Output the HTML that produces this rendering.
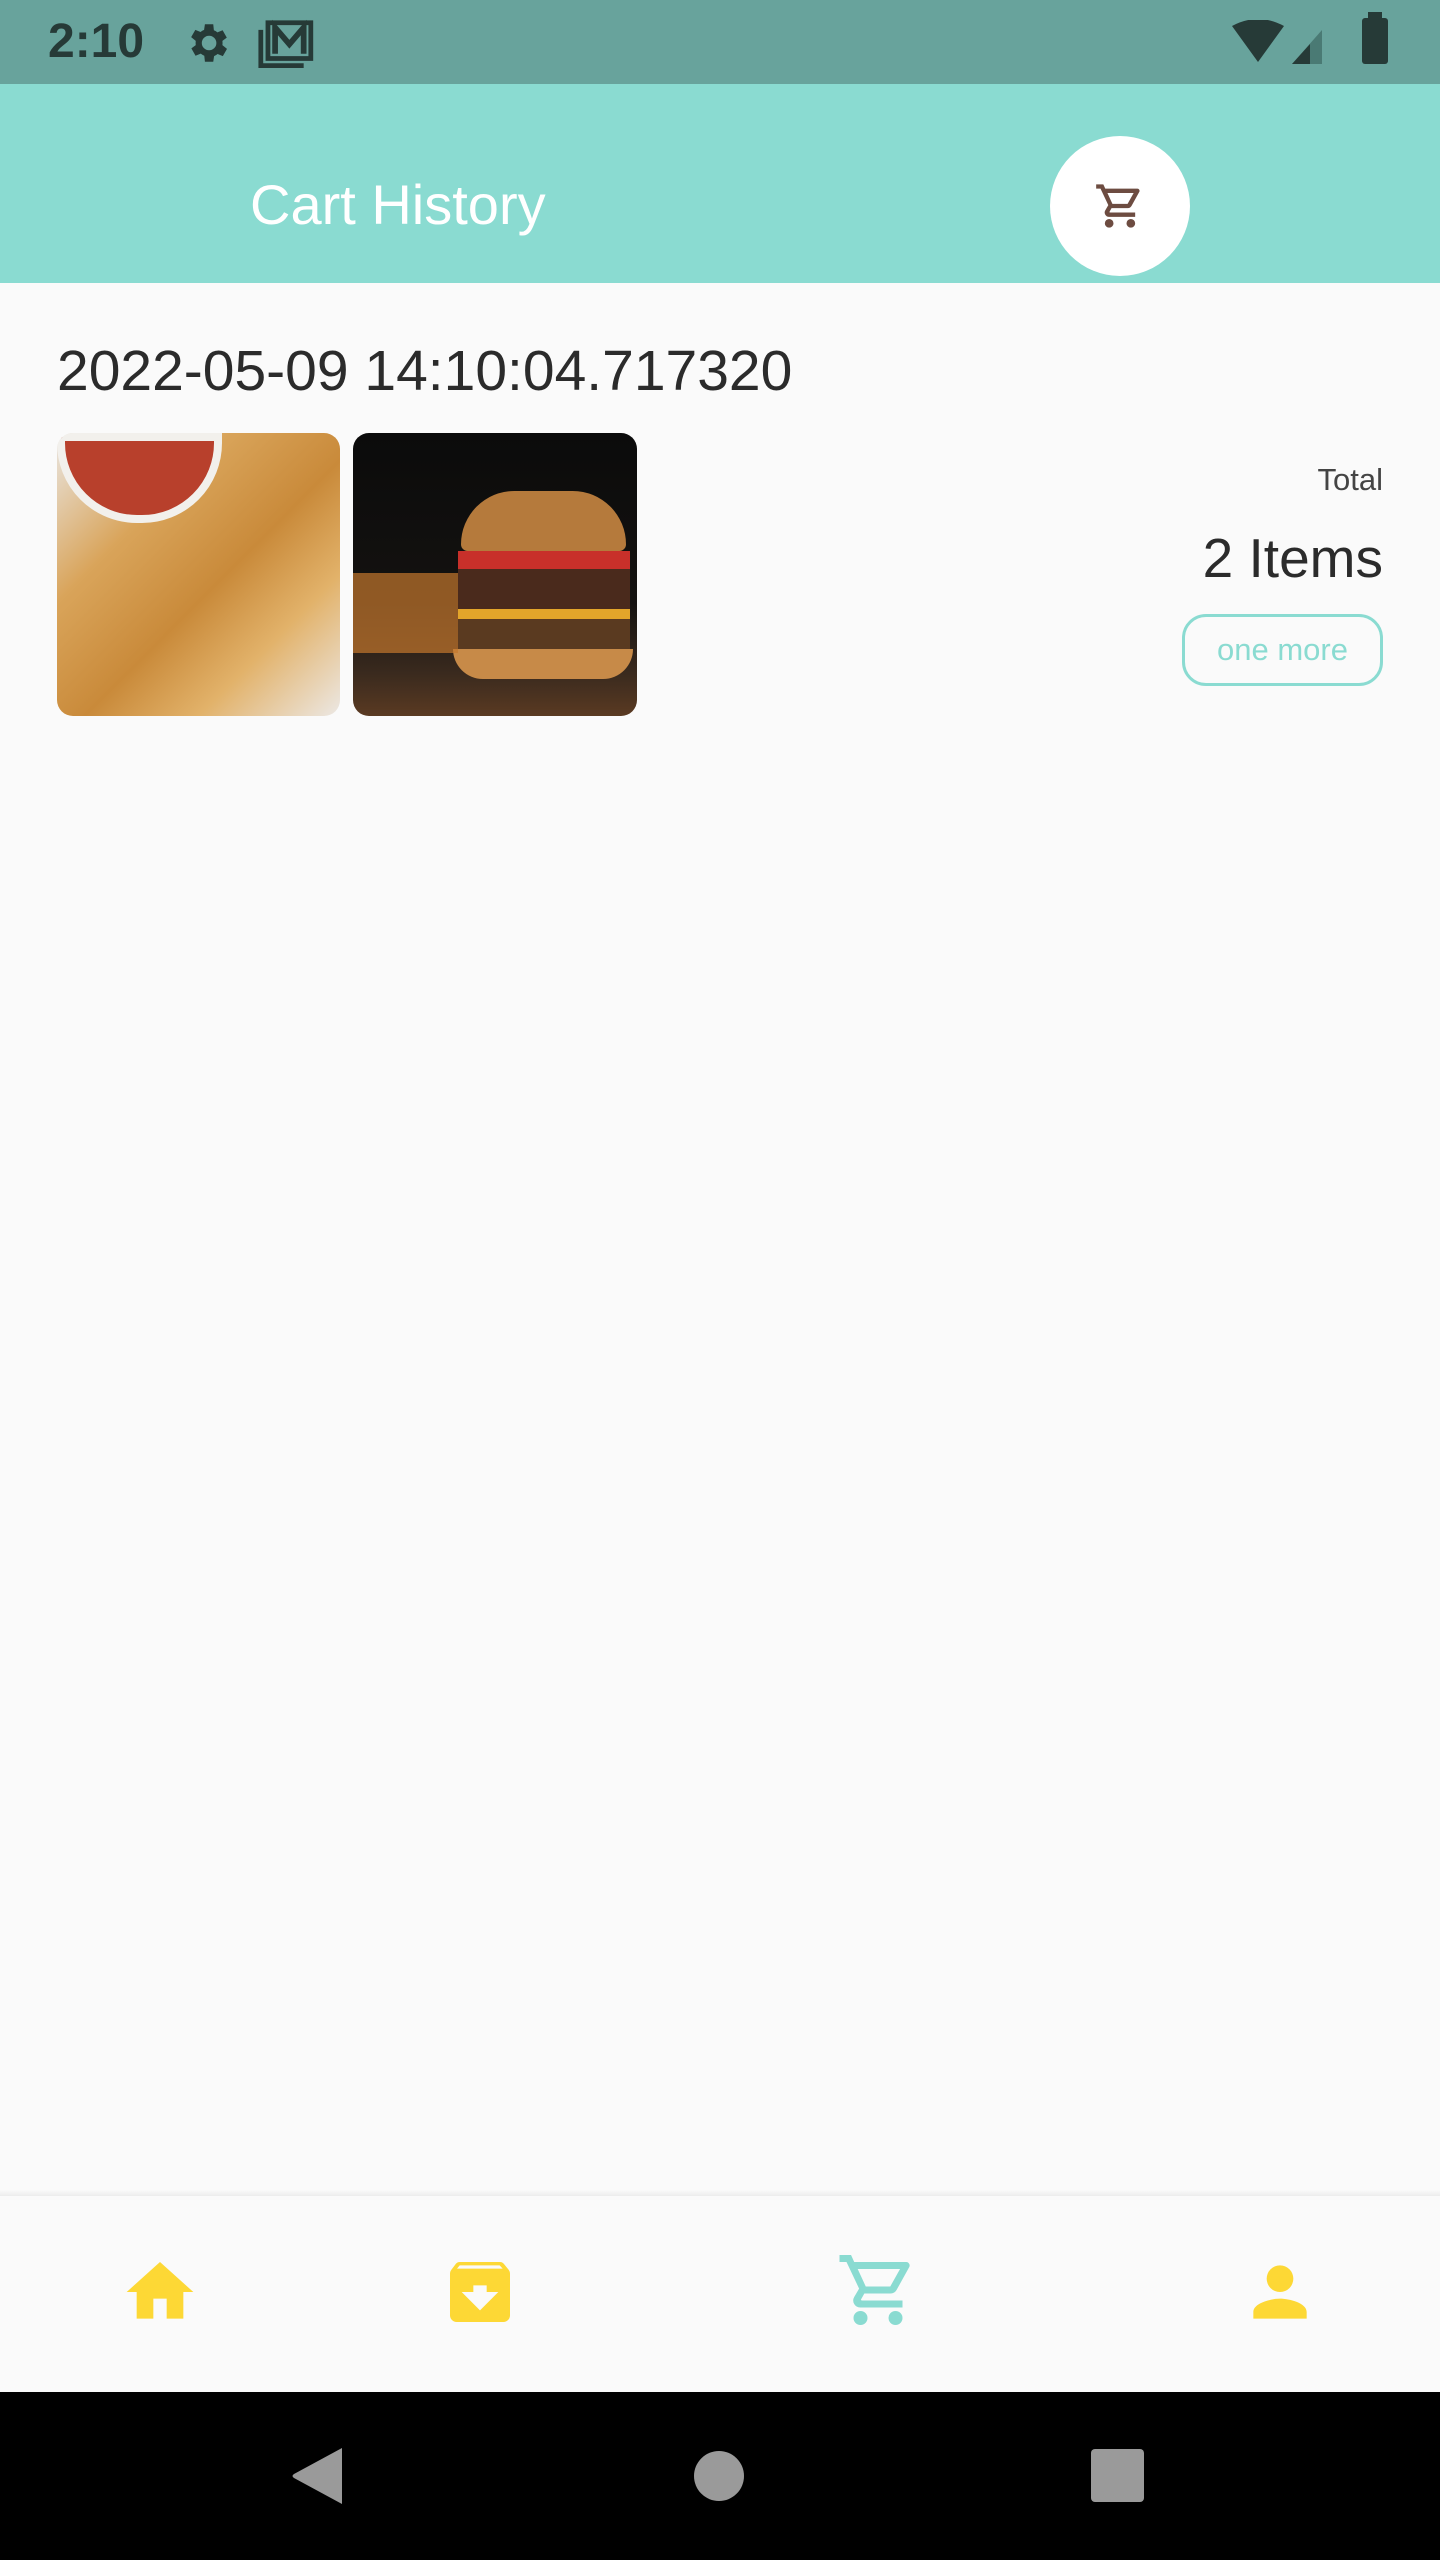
<!DOCTYPE html>
<html><head><style>
*{margin:0;padding:0;box-sizing:border-box}
body{width:1440px;height:2560px;background:#fafafa;font-family:"Liberation Sans",sans-serif;position:relative;overflow:hidden}
.abs{position:absolute}
</style></head><body>
<div class="abs" style="left:0;top:0;width:1440px;height:84px;background:#68a39c"></div>
<div class="abs" style="left:48px;top:14px;font-size:48px;color:#263a37;font-weight:bold">2:10</div>
<svg class="abs" style="left:182px;top:18px" width="50" height="50" viewBox="0 0 24 24"><path fill="#263a37" d="M19.4 13a7.5 7.5 0 000-2l2.1-1.6-2-3.5-2.5 1a7 7 0 00-1.7-1L15 3h-4l-.4 2.7a7 7 0 00-1.7 1l-2.5-1-2 3.5L6.6 11a7.5 7.5 0 000 2l-2.1 1.6 2 3.5 2.5-1a7 7 0 001.7 1L11 21h4l.4-2.7a7 7 0 001.7-1l2.5 1 2-3.5zM13 15.5a3.5 3.5 0 110-7 3.5 3.5 0 010 7z"/></svg>
<svg class="abs" style="left:258px;top:18px" width="58" height="50" viewBox="0 0 24 21"><path fill="none" stroke="#263a37" stroke-width="2" d="M4 2h18v15H4z M1 5v15h18"/><path fill="none" stroke="#263a37" stroke-width="2.4" d="M7 15V4l6 7 6-7v11"/></svg>
<svg class="abs" style="left:1232px;top:20px" width="110" height="46" viewBox="0 0 110 46"><path fill="#263a37" d="M0 6Q26-8 52 6L26 42z"/><path fill="#4a7a74" d="M60 44L90 10V44z"/><path fill="#263a37" d="M60 44L78 24V44z"/></svg>
<div class="abs" style="left:1362px;top:18px;width:26px;height:46px;background:#263a37;border-radius:3px"></div>
<div class="abs" style="left:1368px;top:12px;width:14px;height:8px;background:#263a37"></div>

<div class="abs" style="left:0;top:84px;width:1440px;height:199px;background:#8adbd1"></div>
<div class="abs" style="left:250px;top:172px;font-size:56px;color:#fff;">Cart History</div>
<div class="abs" style="left:1050px;top:136px;width:140px;height:140px;border-radius:50%;background:#fff"></div>
<svg class="abs" style="left:1094px;top:180px" width="52" height="52" viewBox="0 0 24 24"><path fill="#6d4c41" d="M7 18a2 2 0 100 4 2 2 0 000-4zM1 2v2h2l3.6 7.6-1.4 2.4A2 2 0 007 17h12v-2H7.4a.25.25 0 01-.2-.4l.9-1.6h7.5a2 2 0 001.7-1l3.6-6.5A1 1 0 0020 4H5.2l-.9-2zm16 16a2 2 0 100 4 2 2 0 000-4zM6.2 6h12.1l-2.8 5H8.5z"/></svg>

<div class="abs" style="left:57px;top:338px;font-size:57px;color:#2b2b2b;letter-spacing:0px">2022-05-09 14:10:04.717320</div>
<div class="abs" style="left:57px;top:433px;width:283px;height:283px;border-radius:16px;overflow:hidden;background:linear-gradient(135deg,#e9e6e2 0%,#d9a45a 30%,#c98a3a 55%,#e2b26a 75%,#ece8e4 100%)">
<div style="position:absolute;left:0;top:0;width:165px;height:90px;border-radius:0 0 80px 80px;background:#b8402c;border:8px solid #f2f0ec"></div></div>
<div class="abs" style="left:353px;top:433px;width:284px;height:283px;border-radius:16px;overflow:hidden;background:linear-gradient(180deg,#0b0b0b 0%,#141210 60%,#3a2a1e 85%,#5a3a22 100%)">
<div style="position:absolute;left:108px;top:58px;width:165px;height:60px;border-radius:80px 80px 10px 10px;background:#b57a3c"></div>
<div style="position:absolute;left:105px;top:118px;width:172px;height:18px;background:#c8302a"></div>
<div style="position:absolute;left:105px;top:136px;width:172px;height:40px;background:#4a2a1c"></div>
<div style="position:absolute;left:105px;top:176px;width:172px;height:40px;background:#5a3a20;border-top:10px solid #e3a52a"></div>
<div style="position:absolute;left:100px;top:216px;width:180px;height:30px;border-radius:0 0 40px 40px;background:#c78a48"></div>
<div style="position:absolute;left:0;top:140px;width:105px;height:80px;background:#c4782e;opacity:.7"></div></div>

<div class="abs" style="right:57px;top:462px;font-size:31px;color:#444">Total</div>
<div class="abs" style="right:57px;top:526px;font-size:55px;color:#2b2b2b">2 Items</div>
<div class="abs" style="left:1182px;top:614px;width:201px;height:72px;border:3px solid #8adbd1;border-radius:24px;color:#8adbd1;font-size:31px;text-align:center;line-height:66px">one more</div>

<div class="abs" style="left:0;top:2190px;width:1440px;height:6px;background:linear-gradient(#fafafa,#ececec)"></div>
<div class="abs" style="left:0;top:2196px;width:1440px;height:196px;background:#fafafa"></div>
<svg class="abs" style="left:120px;top:2252px" width="80" height="80" viewBox="0 0 24 24"><path fill="#fdd835" d="M10 20v-6h4v6h5v-8h3L12 3 2 12h3v8z"/></svg>
<svg class="abs" style="left:440px;top:2252px" width="80" height="80" viewBox="0 0 24 24"><path fill="#fdd835" d="M20.5 5.2l-1.4-1.7A1.5 1.5 0 0018 3H6a1.5 1.5 0 00-1.2.5L3.5 5.2A2 2 0 003 6.5V19a2 2 0 002 2h14a2 2 0 002-2V6.5a2 2 0 00-.5-1.3zM12 17.5L6.5 12H10v-2h4v2h3.5zM5.1 5l.8-1h12l.9 1z"/></svg>
<svg class="abs" style="left:836px;top:2248px" width="84" height="84" viewBox="0 0 24 24"><path fill="#8adbd1" d="M7 18a2 2 0 100 4 2 2 0 000-4zM1 2v2h2l3.6 7.6-1.4 2.4A2 2 0 007 17h12v-2H7.4a.25.25 0 01-.2-.4l.9-1.6h7.5a2 2 0 001.7-1l3.6-6.5A1 1 0 0020 4H5.2l-.9-2zm16 16a2 2 0 100 4 2 2 0 000-4zM6.2 6h12.1l-2.8 5H8.5z"/></svg>
<svg class="abs" style="left:1240px;top:2252px" width="80" height="80" viewBox="0 0 24 24"><path fill="#fdd835" d="M12 12a4 4 0 100-8 4 4 0 000 8zm0 2c-2.7 0-8 1.3-8 4v2h16v-2c0-2.7-5.3-4-8-4z"/></svg>

<div class="abs" style="left:0;top:2392px;width:1440px;height:168px;background:#000"></div>
<svg class="abs" style="left:290px;top:2446px" width="56" height="60" viewBox="0 0 56 60"><path fill="#9a9a9a" d="M52 2V58L4 32Q1 30 4 28z"/></svg>
<div class="abs" style="left:694px;top:2451px;width:50px;height:50px;border-radius:50%;background:#9a9a9a"></div>
<div class="abs" style="left:1091px;top:2449px;width:53px;height:53px;border-radius:4px;background:#9a9a9a"></div>
</body></html>
